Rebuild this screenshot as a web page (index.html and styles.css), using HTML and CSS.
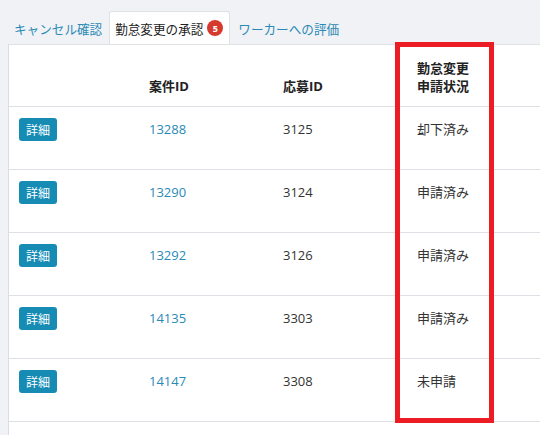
FILE: index.html
```html
<!DOCTYPE html>
<html lang="ja">
<head>
    <meta charset="UTF-8">
    <meta name="viewport" content="width=device-width, initial-scale=1.0">
    <title>勤怠変更の承認</title>
    <link rel="stylesheet" href="styles.css">
</head>
<body>

<div class="page">
    <ul class="tabs">
        <li class="tab"><a href="#">キャンセル確認</a></li>
        <li class="tab active"><a href="#">勤怠変更の承認<span class="badge">5</span></a></li>
        <li class="tab"><a href="#">ワーカーへの評価</a></li>
    </ul>

    <div class="panel">
        <table class="list">
            <colgroup>
                <col class="col-btn">
                <col class="col-id">
                <col class="col-id">
                <col>
            </colgroup>
            <thead>
                <tr>
                    <th></th>
                    <th>案件ID</th>
                    <th>応募ID</th>
                    <th>勤怠変更<br>申請状況</th>
                </tr>
            </thead>
            <tbody>
                <tr>
                    <td><button class="btn-detail">詳細</button></td>
                    <td><a href="#">13288</a></td>
                    <td>3125</td>
                    <td>却下済み</td>
                </tr>
                <tr>
                    <td><button class="btn-detail">詳細</button></td>
                    <td><a href="#">13290</a></td>
                    <td>3124</td>
                    <td>申請済み</td>
                </tr>
                <tr>
                    <td><button class="btn-detail">詳細</button></td>
                    <td><a href="#">13292</a></td>
                    <td>3126</td>
                    <td>申請済み</td>
                </tr>
                <tr>
                    <td><button class="btn-detail">詳細</button></td>
                    <td><a href="#">14135</a></td>
                    <td>3303</td>
                    <td>申請済み</td>
                </tr>
                <tr>
                    <td><button class="btn-detail">詳細</button></td>
                    <td><a href="#">14147</a></td>
                    <td>3308</td>
                    <td>未申請</td>
                </tr>
            </tbody>
        </table>
    </div>

    <!-- annotation box over the status column -->
    <div class="highlight"></div>
</div>

</body>
</html>
```

FILE: styles.css
```css
body {
    margin: 0;
    background-color: #f1f2f5;
    font-family: "Open Sans", "Noto Sans CJK JP", sans-serif;
    color: #333;
}
.page {
    position: relative;
    height: 435px;
    display: flex;
    flex-direction: column;
}
.tabs {
    display: flex;
    list-style: none;
    margin: 11px 0 0 8px;
    padding: 0;
    height: 33px;
}
.tab a {
    display: flex;
    align-items: center;
    height: 33px;
    padding: 0 6px 0 5px;
    font-size: 12.6px;
    color: #2a8ab6;
    text-decoration: none;
    border: 1px solid transparent;
    border-bottom: none;
    box-sizing: border-box;
}
.tab.active a {
    color: #222;
    background-color: #ffffff;
    border-color: #dfe1e5;
    border-radius: 3px 3px 0 0;
}
.tab:last-child a {
    padding-left: 7px;
}
.badge {
    display: inline-flex;
    justify-content: center;
    align-items: center;
    width: 16px;
    height: 16px;
    margin-left: 4px;
    border-radius: 50%;
    background-color: #d63a2e;
    color: #fff;
    font-size: 9px;
    font-weight: bold;
}
.panel {
    flex: 1;
    margin-left: 8px;
    background-color: #ffffff;
    border-top: 1px solid #e1e2e6;
    border-left: 1px solid #dcdde2;
}
.list {
    width: 100%;
    border-collapse: collapse;
    table-layout: fixed;
    font-size: 13px;
}
.col-btn {
    width: 130px;
}
.col-id {
    width: 134px;
}
.list th {
    height: 61px;
    padding: 0 10px 11px;
    box-sizing: border-box;
    vertical-align: bottom;
    text-align: left;
    font-weight: bold;
    line-height: 18px;
    color: #222;
    border-bottom: 1px solid #dee0e5;
}
.list td {
    height: 63px;
    padding: 11px 10px 0;
    box-sizing: border-box;
    vertical-align: top;
    line-height: 23px;
    border-bottom: 1px solid #dee0e5;
}
.list a {
    color: #2a8ab6;
    text-decoration: none;
}
.btn-detail {
    height: 23px;
    padding: 0 7px;
    border: none;
    border-radius: 3px;
    background-color: #168cb4;
    color: #fff;
    font-family: "Noto Sans CJK JP", sans-serif;
    font-size: 12px;
    cursor: pointer;
}
.highlight {
    position: absolute;
    left: 395px;
    top: 42px;
    width: 99px;
    height: 381px;
    box-sizing: border-box;
    border: 5px solid #ec1c24;
}
```
